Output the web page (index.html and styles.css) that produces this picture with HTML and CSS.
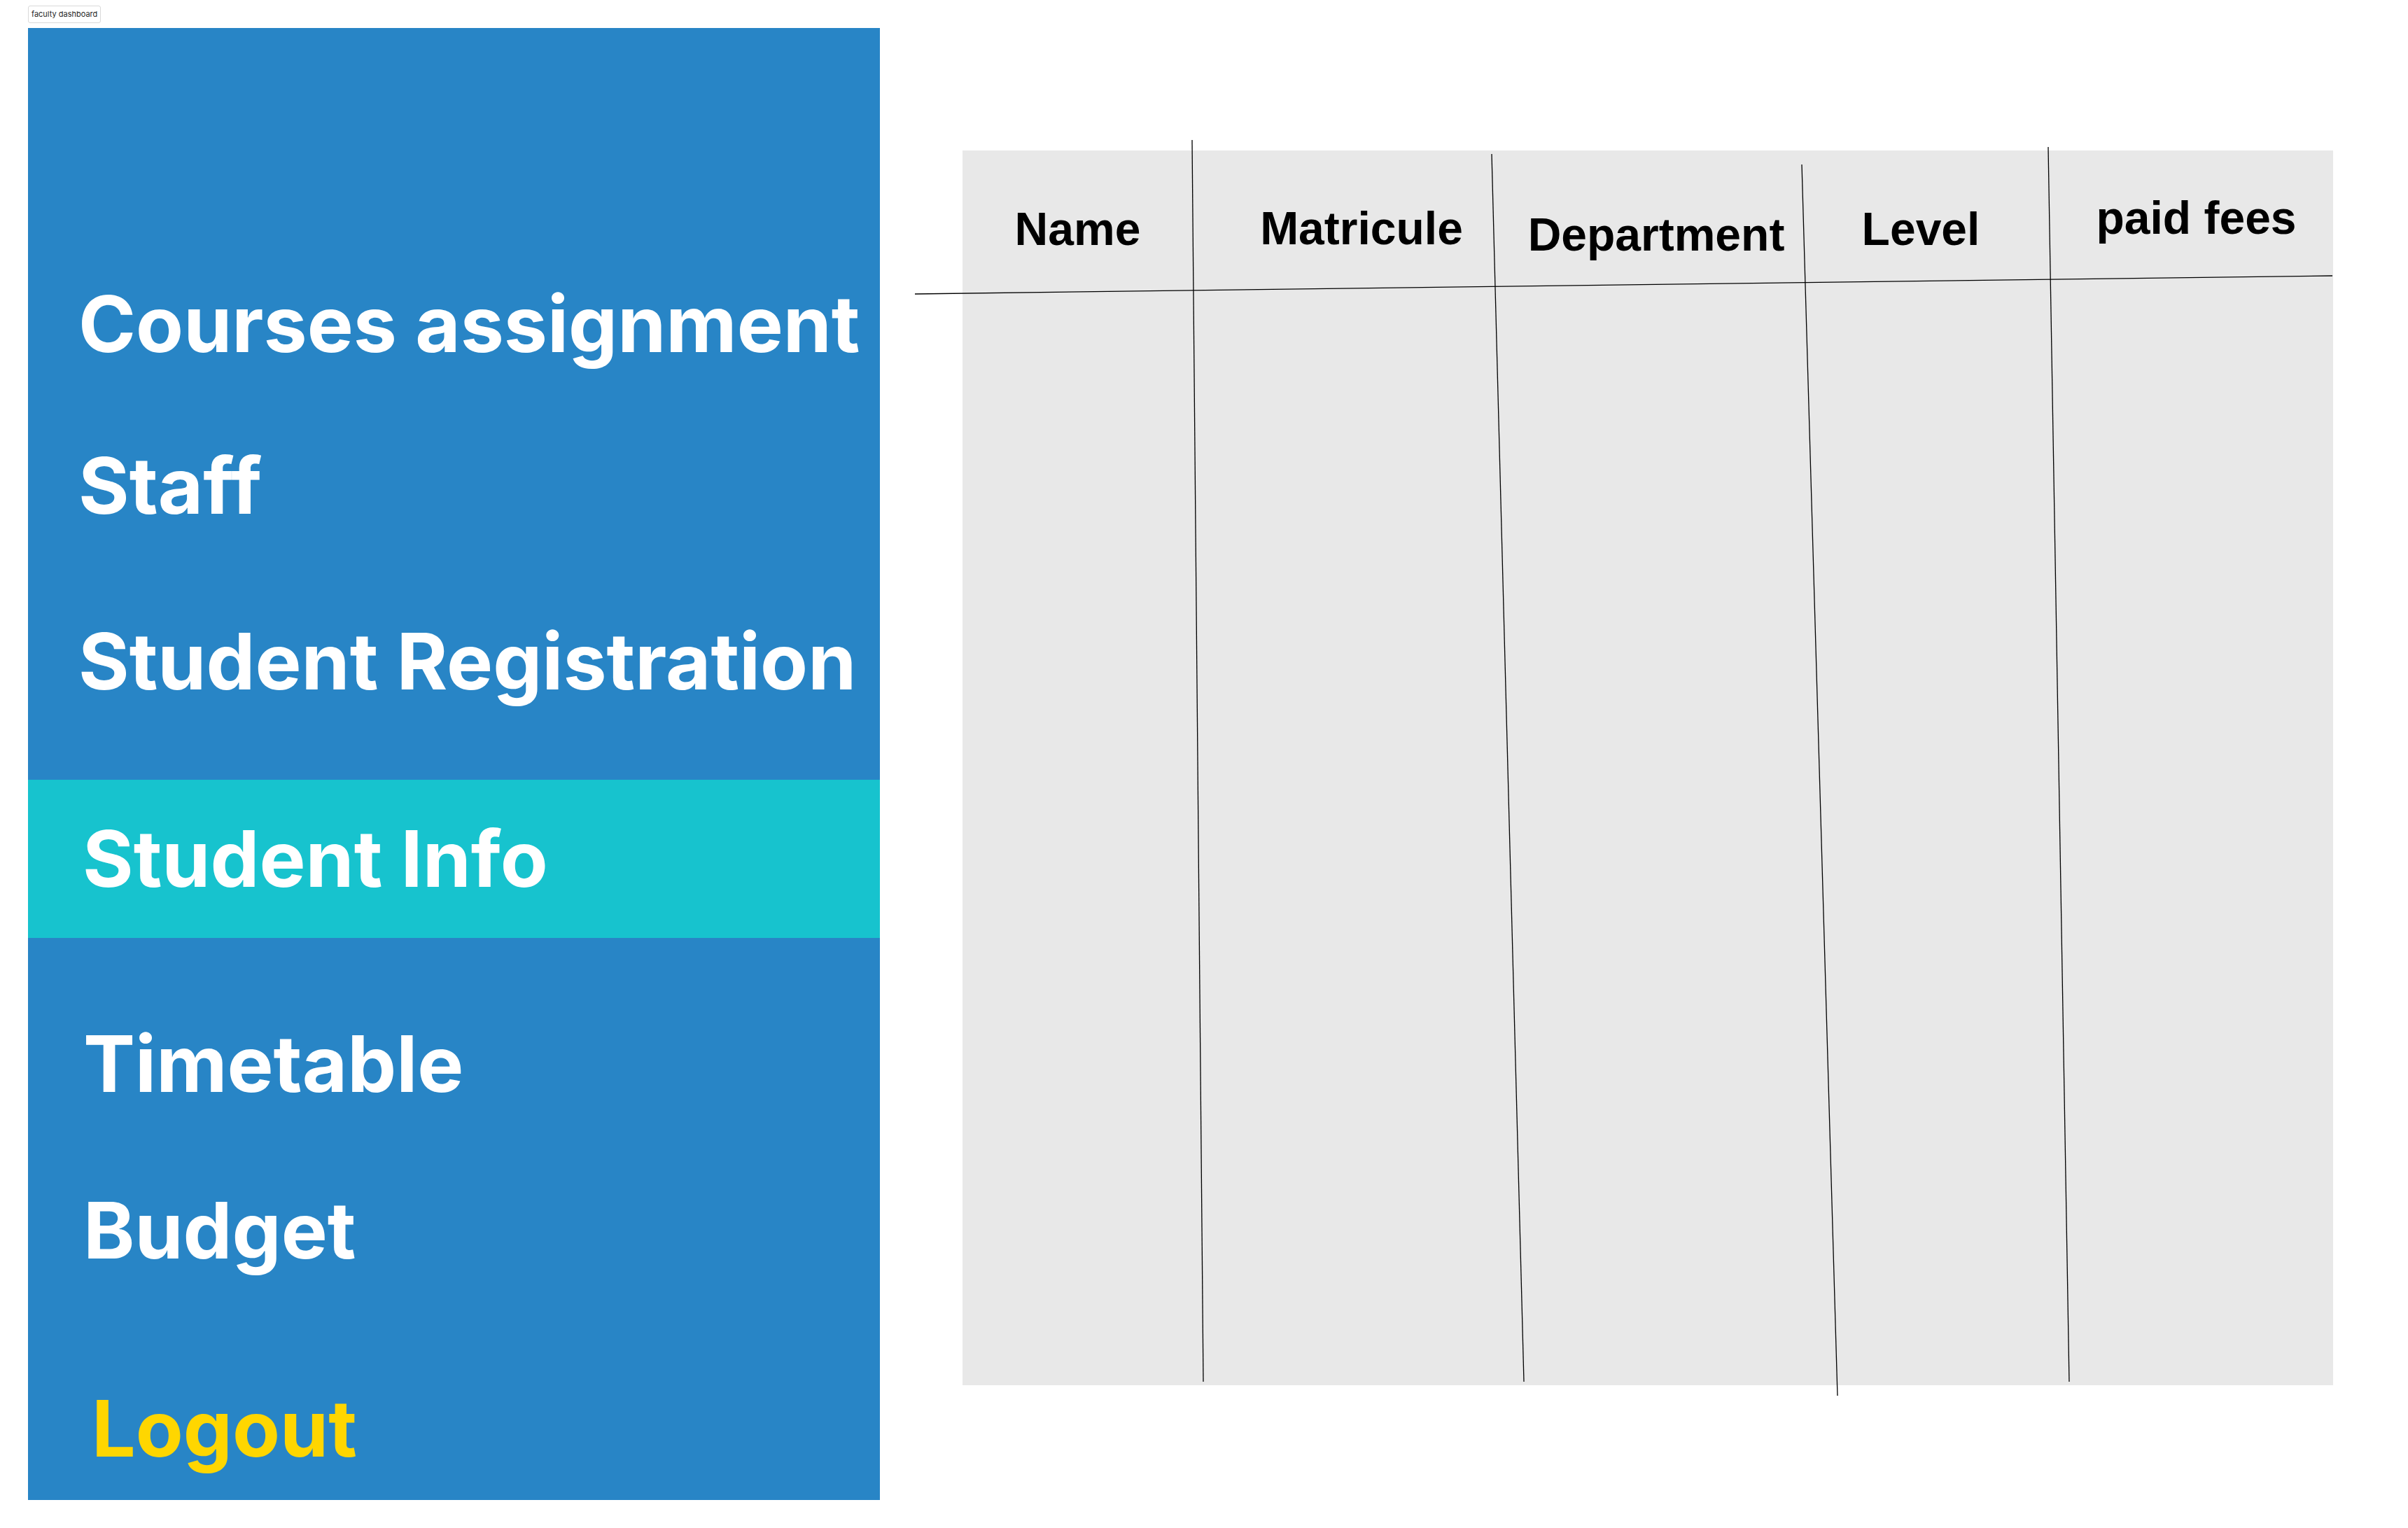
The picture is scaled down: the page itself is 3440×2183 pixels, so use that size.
FILE: index.html
```html
<!DOCTYPE html>
<html lang="en">
<head>
<meta charset="utf-8">
<title>faculty dashboard</title>
<link rel="stylesheet" href="styles.css">
</head>
<body>
<div class="page">
  <div class="frame-label">faculty dashboard</div>
  <div class="layout">
    <nav class="sidebar">
      <a class="nav-item nav-courses">Courses assignment</a>
      <a class="nav-item nav-staff">Staff</a>
      <a class="nav-item nav-registration">Student Registration</a>
      <a class="nav-item nav-info active">Student Info</a>
      <a class="nav-item nav-timetable">Timetable</a>
      <a class="nav-item nav-budget">Budget</a>
      <a class="nav-item nav-logout">Logout</a>
    </nav>
    <main class="content">
      <div class="table">
        <div class="table-head">
          <div class="th th-name">Name</div>
          <div class="th th-matricule">Matricule</div>
          <div class="th th-department">Department</div>
          <div class="th th-level">Level</div>
          <div class="th th-fees">paid fees</div>
        </div>
        <svg class="table-lines" width="1958" height="1764" aria-hidden="true">
          <line x1="-68" y1="205" x2="1957" y2="179"/>
          <line x1="328" y1="-15" x2="344" y2="1759"/>
          <line x1="756" y1="5" x2="802" y2="1759"/>
          <line x1="1199" y1="20" x2="1250" y2="1779"/>
          <line x1="1551" y1="-5" x2="1581" y2="1759"/>
        </svg>
      </div>
    </main>
  </div>
</div>
</body>
</html>
```
FILE: styles.css
```css
html, body {
  margin: 0;
  padding: 0;
  background: #ffffff;
}

.page {
  padding: 8px 0 0 40px;
  font-family: Inter, "Noto Sans", sans-serif;
}

.frame-label {
  display: inline-block;
  box-sizing: border-box;
  height: 25px;
  line-height: 23px;
  padding: 0 4px;
  border: 1px solid #d9d9d9;
  border-radius: 3px;
  font-family: Inter, "Noto Sans", sans-serif;
  font-size: 11px;
  color: #1f1f1f;
  background: #ffffff;
  vertical-align: top;
}

.layout {
  display: flex;
  align-items: flex-start;
  margin-top: 7px;
}

/* Sidebar */
.sidebar {
  box-sizing: border-box;
  width: 1217px;
  height: 2103px;
  flex: none;
  background: #2885c6;
  display: flex;
  flex-direction: column;
  padding-top: 310px;
}

.nav-item {
  display: block;
  padding: 58px 0 58px 72px;
  font-family: Inter, "Noto Sans", sans-serif;
  font-weight: 700;
  font-size: 111px;
  line-height: 110px;
  color: #ffffff;
  white-space: nowrap;
  text-decoration: none;
}

.nav-staff { margin-top: 5px; }
.nav-registration { margin-top: 25px; }
.nav-info { margin-top: 56px; padding-left: 78px; }
.nav-timetable { margin-top: 67px; padding-left: 79px; }
.nav-budget { margin-top: 12px; padding-left: 79px; }
.nav-logout { margin-top: 57px; padding-left: 91px; color: #ffd600; }

.nav-item.active {
  background: #17c3ce;
}

/* Content */
.content {
  flex: 1;
  padding: 175px 0 0 118px;
}

.table {
  position: relative;
  width: 1958px;
  height: 1764px;
  background: #e8e8e8;
}

.table-head {
  display: grid;
  grid-template-columns: 329px 430px 442px 352px 405px;
}

.th {
  box-sizing: border-box;
  padding-top: 79px;
  text-align: center;
  font-family: "Liberation Sans", Arial, sans-serif;
  font-weight: 700;
  font-size: 66px;
  line-height: 66px;
  color: #000000;
  white-space: nowrap;
}

.th-matricule { padding-top: 78px; padding-left: 52px; }
.th-department { padding-top: 87px; padding-left: 22px; }
.th-level { padding-right: 16px; }
.th-fees { padding-top: 63px; padding-left: 14px; }

.table-lines {
  position: absolute;
  left: 0;
  top: 0;
  overflow: visible;
}

.table-lines line {
  stroke: #000000;
  stroke-width: 1.3;
}
```
